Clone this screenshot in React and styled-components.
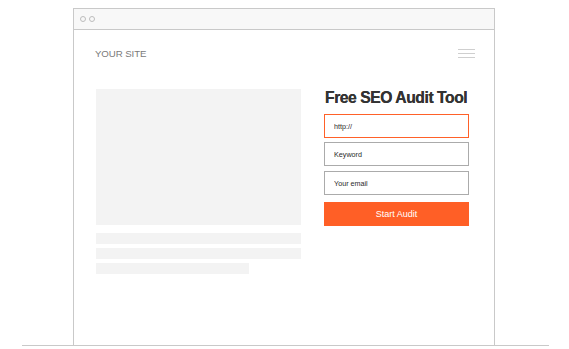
import React from 'react';
import styled, { createGlobalStyle } from 'styled-components';

const GlobalStyle = createGlobalStyle`
  html, body {
    margin: 0;
    padding: 0;
    background: #ffffff;
  }
  body {
    font-family: "Liberation Sans", Arial, sans-serif;
  }
  * {
    box-sizing: border-box;
  }
`;

const Scene = styled.div`
  width: 569px;
  height: 349px;
  padding-top: 8px;
  overflow: hidden;
`;

const BrowserFrame = styled.div`
  margin-left: 73px;
  width: 422px;
  height: 337px;
  border: 1px solid #c9c9c9;
  border-bottom: none;
  display: flex;
  flex-direction: column;
`;

const Ground = styled.div`
  margin-left: 22px;
  width: 527px;
  height: 1px;
  background: #c9c9c9;
`;

const TitleBar = styled.div`
  height: 21px;
  background: #f8f8f8;
  border-bottom: 1px solid #c9c9c9;
  display: flex;
  align-items: center;
  gap: 3px;
  padding-left: 6px;
`;

const Dot = styled.span`
  width: 6px;
  height: 6px;
  border-radius: 50%;
  border: 1px solid #bdbdbd;
`;

const Header = styled.div`
  height: 47px;
  display: flex;
  align-items: center;
  justify-content: space-between;
  padding: 0 19px 0 21px;
`;

const Logo = styled.div`
  font-size: 9.7px;
  color: #7a7a7a;
  letter-spacing: -0.1px;
`;

const Burger = styled.div`
  width: 17px;
  display: flex;
  flex-direction: column;
  gap: 3px;
  margin-top: -1px;

  span {
    height: 1px;
    background: #cfcfcf;
  }
`;

const Main = styled.div`
  display: flex;
  gap: 23px;
  padding: 12px 0 0 22px;
`;

const LeftColumn = styled.div`
  width: 205px;
  display: flex;
  flex-direction: column;
`;

const ImageBox = styled.div`
  height: 136px;
  background: #f3f3f3;
  margin-bottom: 8px;
`;

const TextLine = styled.div`
  height: 11px;
  width: ${p => p.$width || '100%'};
  background: #f3f3f3;
  margin-bottom: 4px;
`;

const Form = styled.div`
  width: 145px;
  display: flex;
  flex-direction: column;
`;

const Title = styled.h1`
  margin: 0 0 7px 1px;
  font-size: 15.7px;
  line-height: 18px;
  font-weight: bold;
  letter-spacing: -0.45px;
  color: #333333;
  white-space: nowrap;
  text-shadow: 0 0 0.4px #333333;
`;

const Field = styled.input`
  height: 24px;
  width: 100%;
  margin: 0 0 ${p => p.$gap || 5}px;
  padding: 0 0 0 9px;
  border: 1px solid ${p => (p.$active ? '#ff6129' : '#ababab')};
  outline: none;
  background: #ffffff;
  font-family: "Liberation Sans", Arial, sans-serif;
  font-size: 7.2px;
  color: #2a2a2a;

  &::placeholder {
    color: #2a2a2a;
    opacity: 1;
  }
`;

const AuditButton = styled.button`
  margin-top: 2px;
  height: 24px;
  width: 100%;
  border: none;
  background: #ff5f26;
  color: #ffffff;
  font-family: "Liberation Sans", Arial, sans-serif;
  font-size: 9px;
  padding: 0;
  cursor: pointer;
`;

export default function App() {
  return (
    <>
      <GlobalStyle />
      <Scene>
        <BrowserFrame>
          <TitleBar>
            <Dot />
            <Dot />
          </TitleBar>
          <Header>
            <Logo>YOUR SITE</Logo>
            <Burger>
              <span />
              <span />
              <span />
            </Burger>
          </Header>
          <Main>
            <LeftColumn>
              <ImageBox />
              <TextLine />
              <TextLine />
              <TextLine $width="153px" />
            </LeftColumn>
            <Form>
              <Title>Free SEO Audit Tool</Title>
              <Field $active placeholder="http://" $gap={4} />
              <Field placeholder="Keyword" $gap={5} />
              <Field placeholder="Your email" $gap={5} />
              <AuditButton>Start Audit</AuditButton>
            </Form>
          </Main>
        </BrowserFrame>
        <Ground />
      </Scene>
    </>
  );
}
